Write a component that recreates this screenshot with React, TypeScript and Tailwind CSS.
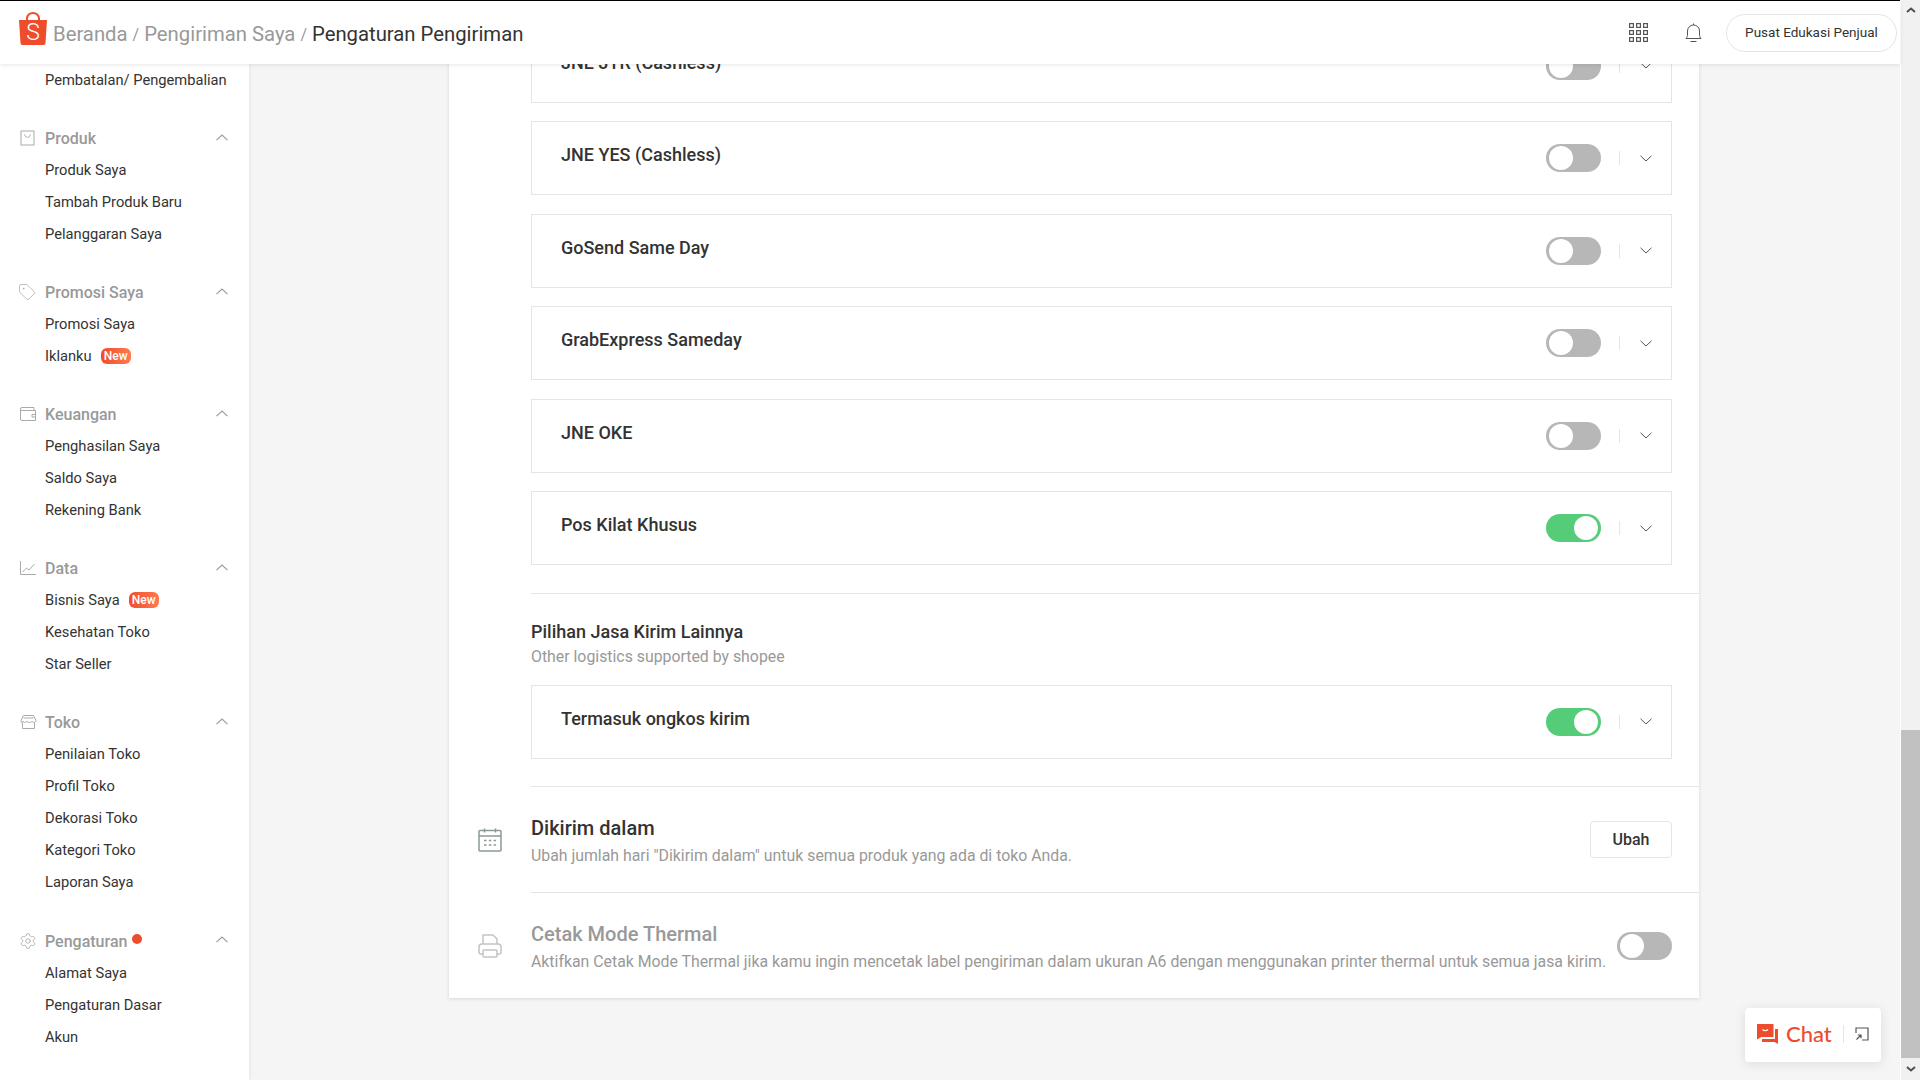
import React from 'react';
import { Settings, Tag } from 'lucide-react';

const ProdukIcon = () => (
  <svg width="16" height="16" viewBox="0 0 16 16" fill="none" stroke="#aaaaaa" strokeWidth="1">
    <rect x="1" y="1" width="13" height="14" />
    <path d="M4.500 4.500c.6 2 1.600 2.800 3 2.800s2.400-.8 3-2.800" />
  </svg>
);

const WalletIcon = () => (
  <svg width="16" height="16" viewBox="0 0 16 16" fill="none" stroke="#aaaaaa" strokeWidth="1">
    <path d="M.5 3.500V13a1.500 1.500 0 0 0 1.500 1.500H15.500V4.500H2A1.500 1.500 0 0 1 .5 3.200 1.500 1.500 0 0 1 2 1.500H14v3" />
    <path d="M15.500 8.500h-3.500v2.500h3.500" />
  </svg>
);

const ChartIcon = () => (
  <svg width="16" height="16" viewBox="0 0 16 16" fill="none" stroke="#aaaaaa" strokeWidth="1">
    <path d="M.5 1v13.500H16" />
    <path d="M2.500 12l4-4 2.500 2 5.500-6" />
  </svg>
);

const StoreIcon = () => (
  <svg width="17" height="16" viewBox="0 0 17 16" fill="none" stroke="#aaaaaa" strokeWidth="1">
    <path d="M3.500 1.500h10L16 6.500c0 1.500-1.300 2-2 2s-1.800-.5-2-1.500c-.2 1-1.500 1.500-2 1.500S7 8 7 7c-.2 1-1.500 1.500-2 1.500S3.200 8 3 7c-.2 1-1.200 1.500-1.500 1.500S1 7.500 1 6.500z" />
    <path d="M2.500 8.500v6h12v-6" />
    <path d="M3.500 4h10" />
  </svg>
);

const ChevronUp = () => (
  <svg width="12" height="7" viewBox="0 0 12 7" fill="none" stroke="#999999" strokeWidth="1.100">
    <path d="M.5 6.200L6 1l5.500 5.200" />
  </svg>
);

const ChevronDown = () => (
  <svg width="12" height="7" viewBox="0 0 12 7" fill="none" stroke="#555555" strokeWidth="1">
    <path d="M.5 .8L6 6l5.500-5.200" />
  </svg>
);

const NewBadge = () => (
  <span className="ml-[9px] flex h-[16px] w-[30px] items-center justify-center rounded-[6px] bg-gradient-to-r from-[#ee4d2d] to-[#ff7a50] text-[12px] font-medium leading-none text-white">
    New
  </span>
);

const menu = [
  {
    title: 'Produk',
    icon: <ProdukIcon />,
    items: [{ label: 'Produk Saya' }, { label: 'Tambah Produk Baru' }, { label: 'Pelanggaran Saya' }],
  },
  {
    title: 'Promosi Saya',
    icon: <Tag className="-ml-[2px]" size={18} strokeWidth={1} color="#aaaaaa" />,
    items: [{ label: 'Promosi Saya' }, { label: 'Iklanku', isNew: true }],
  },
  {
    title: 'Keuangan',
    icon: <WalletIcon />,
    items: [{ label: 'Penghasilan Saya' }, { label: 'Saldo Saya' }, { label: 'Rekening Bank' }],
  },
  {
    title: 'Data',
    icon: <ChartIcon />,
    items: [{ label: 'Bisnis Saya', isNew: true }, { label: 'Kesehatan Toko' }, { label: 'Star Seller' }],
  },
  {
    title: 'Toko',
    icon: <StoreIcon />,
    items: [
      { label: 'Penilaian Toko' },
      { label: 'Profil Toko' },
      { label: 'Dekorasi Toko' },
      { label: 'Kategori Toko' },
      { label: 'Laporan Saya' },
    ],
  },
  {
    title: 'Pengaturan',
    icon: <Settings className="-ml-[1px]" size={18} strokeWidth={1} color="#a0a0a0" />,
    dot: true,
    items: [{ label: 'Alamat Saya' }, { label: 'Pengaturan Dasar' }, { label: 'Akun' }],
  },
];

const Sidebar = () => (
  <aside className="w-[249px] shrink-0 bg-white text-[14.7px] shadow-[0_0_4px_rgba(0,0,0,0.1)]">
    <div className="flex h-[32px] items-center pl-[45px] text-[#333333]">Pembatalan/ Pengembalian</div>
    {menu.map((group) => (
      <div key={group.title} className="mt-[26px]">
        <div className={`flex items-center pl-[20px] pr-[21px] ${group.dot ? 'h-[33px]' : 'h-[32px]'}`}>
          <span className="flex w-[25px] items-center">{group.icon}</span>
          <span className="pt-[2px] text-[16px] font-medium text-[#999999]">{group.title}</span>
          {group.dot && <span className="mb-[3px] ml-[5px] h-[10px] w-[10px] rounded-full bg-[#ee4d2d]" />}
          <span className="mb-[2px] ml-auto flex">
            <ChevronUp />
          </span>
        </div>
        {group.items.map((item) => (
          <div key={item.label} className="flex h-[32px] items-center pl-[45px] text-[#333333]">
            {item.label}
            {item.isNew && <NewBadge />}
          </div>
        ))}
      </div>
    ))}
  </aside>
);

const Toggle = ({ on = false }: { on?: boolean }) => (
  <div
    className={`flex h-[28px] w-[55px] items-center rounded-full p-[3px] ${
      on ? 'justify-end bg-[#55cc77]' : 'justify-start bg-[#b7b7b7]'
    }`}
  >
    <span className="h-[24px] w-[24px] rounded-full bg-white" />
  </div>
);

const ShippingRow = ({ name, on = false }: { name: string; on?: boolean }) => (
  <div className="flex h-[74px] items-center border border-[#e5e5e5] bg-white pl-[29px] pr-[19px]">
    <div className="pb-[7px] text-[18px] font-medium text-[#333333]">{name}</div>
    <div className="ml-auto">
      <Toggle on={on} />
    </div>
    <div className="ml-[18px] h-[14px] w-px bg-[#e5e5e5]" />
    <div className="ml-[20px] flex">
      <ChevronDown />
    </div>
  </div>
);

const Divider = () => <div className="ml-[82px] h-px bg-[#e5e5e5]" />;

const CalendarIcon = () => (
  <svg width="24" height="24" viewBox="0 0 24 24" fill="none" stroke="#8a9a98" strokeWidth="1.500">
    <rect x="1" y="2.500" width="22" height="20.500" rx="1" />
    <path d="M1 8h22M6.500 .5v4M17.500 .5v4" />
    <path d="M6 12.500h2.500M10.800 12.500h2.500M15.600 12.500h2.500M6 17h2.500M10.800 17h2.500M15.600 17h2.500" />
  </svg>
);

const PrinterIcon = () => (
  <svg width="24" height="24" viewBox="0 0 24 24" fill="none" stroke="#c4c4c4" strokeWidth="1.500">
    <path d="M5 10V1h10l4 4v5" />
    <path d="M5 20H3a2 2 0 0 1-2-2v-5a3 3 0 0 1 3-3h16a3 3 0 0 1 3 3v5a2 2 0 0 1-2 2h-2" />
    <rect x="5" y="16" width="14" height="7" rx="1" />
  </svg>
);

const ShopeeLogo = () => (
  <svg width="30" height="33" viewBox="0 0 30 33">
    <path d="M9 9V6.500a6 5.500 0 0 1 12 0V9" fill="none" stroke="#ee4d2d" strokeWidth="2" />
    <path d="M1 8h28l-1.500 23a2 2 0 0 1-2 2h-21a2 2 0 0 1-2-2z" fill="#ee4d2d" />
    <text x="15" y="28" textAnchor="middle" fontFamily="Roboto, sans-serif" fontSize="23" fontWeight="300" fill="#ffffff">
      S
    </text>
  </svg>
);

const GridIcon = () => (
  <svg width="19" height="19" viewBox="0 0 19 19" fill="none" stroke="#555555" strokeWidth="1.200">
    {[0, 7, 14].map((y) =>
      [0, 7, 14].map((x) => <rect key={`${x}-${y}`} x={x + 0.6} y={y + 0.6} width="3.800" height="3.800" />),
    )}
  </svg>
);

const BellIcon = () => (
  <svg width="17" height="20" viewBox="0 0 17 20" fill="none" stroke="#555555" strokeWidth="1">
    <path d="M1 15.500c1-1 1.500-2.500 1.500-4.500V8a6 6 0 0 1 12 0v3c0 2 .5 3.500 1.500 4.500z" />
    <path d="M8.500 .5v1.500M5.500 18.500h6" />
  </svg>
);

const Header = () => (
  <header className="relative z-10 flex h-[63px] shrink-0 items-center bg-white pl-[18px] pr-[3px] shadow-[0_1px_4px_rgba(0,0,0,0.1)]">
    <div className="mb-[8px] flex">
      <ShopeeLogo />
    </div>
    <div className="ml-[5px] flex items-center pt-[4px] text-[20.3px] text-[#999999]">
      <span>Beranda</span>
      <span className="mx-[5px] text-[16px]">/</span>
      <span>Pengiriman Saya</span>
      <span className="mx-[5px] text-[16px]">/</span>
      <span className="text-[#333333]">Pengaturan Pengiriman</span>
    </div>
    <div className="ml-auto flex items-center">
      <GridIcon />
      <div className="ml-[37px] flex">
        <BellIcon />
      </div>
      <button className="ml-[24px] h-[38px] w-[171px] rounded-full border border-[#e5e5e5] bg-white text-[13.5px] text-[#333333]">
        Pusat Edukasi Penjual
      </button>
    </div>
  </header>
);

const ChatWidget = () => (
  <div className="absolute left-[1745px] top-[1008px] z-20 flex h-[54px] w-[136px] items-center rounded-[4px] bg-white pb-[2px] pl-[12px] shadow-[0_2px_12px_rgba(0,0,0,0.1)]">
    <svg width="21" height="20" viewBox="0 0 21 20">
      <path d="M0 0h16.500v13H4.500L0 15.500z" fill="#ee4d2d" />
      <path d="M5 15h13V5h3v15l-3.500-2H5z" fill="#ee4d2d" />
      <path d="M5.500 5.500c1.500 1.400 4 1.400 5.500 0" fill="none" stroke="#ffffff" strokeWidth="1.200" />
    </svg>
    <span className="ml-[8px] text-[22px] font-medium leading-none text-[#ee4d2d] [font-family:Lato,sans-serif]">
      Chat
    </span>
    <div className="ml-[11px] h-[18px] w-px bg-[#e5e5e5]" />
    <svg className="ml-[11px]" width="14" height="14" viewBox="0 0 14 14" fill="none" stroke="#555555" strokeWidth="1.200">
      <path d="M1 6V1h12v12H7" />
      <path d="M1.500 12.500L6 8M2.800 8H6v3.200" />
    </svg>
  </div>
);

const Scrollbar = () => (
  <div className="ml-px flex w-[19px] shrink-0 flex-col items-center bg-[#f1f1f1]">
    <div className="flex h-[20px] items-center justify-center">
      <svg width="10" height="6" viewBox="0 0 10 6" fill="none" stroke="#505050" strokeWidth="2">
        <path d="M1 5l4-3.500L9 5" />
      </svg>
    </div>
    <div className="mt-[710px] h-[328px] w-full bg-[#c1c1c1]" />
    <div className="flex h-[22px] items-center justify-center">
      <svg width="10" height="6" viewBox="0 0 10 6" fill="none" stroke="#505050" strokeWidth="2">
        <path d="M1 1l4 3.500L9 1" />
      </svg>
    </div>
  </div>
);

export default function App() {
  return (
    <div className="relative flex h-[1080px] w-[1920px] overflow-hidden font-['Roboto',sans-serif]">
      <div className="flex w-[1900px] shrink-0 flex-col border-t border-black bg-[#f5f5f5]">
        <Header />
        <div className="flex min-h-0 flex-1">
          <Sidebar />
          <main className="min-w-0 flex-1 overflow-hidden">
            <div className="ml-[200px] mt-[-35.5px] w-[1250px] bg-white shadow-[0_1px_4px_rgba(0,0,0,0.12)]">
              <div className="pl-[82px] pr-[27px]">
                <div className="flex flex-col gap-[18.5px]">
                  <ShippingRow name="JNE JTR (Cashless)" />
                  <ShippingRow name="JNE YES (Cashless)" />
                  <ShippingRow name="GoSend Same Day" />
                  <ShippingRow name="GrabExpress Sameday" />
                  <ShippingRow name="JNE OKE" />
                  <ShippingRow name="Pos Kilat Khusus" on />
                </div>
              </div>
              <div className="mt-[28px]">
                <Divider />
              </div>
              <div className="pl-[82px] pr-[27px]">
                <div className="pb-[17px] pt-[26px]">
                  <div className="text-[18px] font-medium leading-6 text-[#333333]">Pilihan Jasa Kirim Lainnya</div>
                  <div className="mt-[1.5px] text-[15.85px] leading-[22px] text-[#999999]">Other logistics supported by shopee</div>
                </div>
                <ShippingRow name="Termasuk ongkos kirim" on />
              </div>
              <div className="mt-[27.5px]">
                <Divider />
              </div>
              <div className="flex h-[105px] items-center pl-[29px] pr-[27px]">
                <CalendarIcon />
                <div className="ml-[29px] pt-[2px]">
                  <div className="text-[20px] font-medium leading-7 text-[#333333]">Dikirim dalam</div>
                  <div className="mt-[3px] text-[15.85px] leading-[22px] text-[#999999]">
                    Ubah jumlah hari "Dikirim dalam" untuk semua produk yang ada di toko Anda.
                  </div>
                </div>
                <button className="ml-auto h-[37px] w-[82px] rounded-[4px] border border-[#e5e5e5] bg-white text-[16px] font-medium text-[#333333]">
                  Ubah
                </button>
              </div>
              <Divider />
              <div className="flex h-[105px] items-center pl-[29px] pr-[27px]">
                <PrinterIcon />
                <div className="ml-[29px] pt-[2px]">
                  <div className="text-[20px] font-medium leading-7 text-[#999999]">Cetak Mode Thermal</div>
                  <div className="mt-[3px] whitespace-nowrap text-[15.85px] leading-[22px] text-[#999999]">
                    Aktifkan Cetak Mode Thermal jika kamu ingin mencetak label pengiriman dalam ukuran A6 dengan menggunakan printer thermal untuk semua jasa kirim.
                  </div>
                </div>
                <div className="ml-auto">
                  <Toggle />
                </div>
              </div>
            </div>
          </main>
        </div>
      </div>
      <Scrollbar />
      <ChatWidget />
    </div>
  );
}
